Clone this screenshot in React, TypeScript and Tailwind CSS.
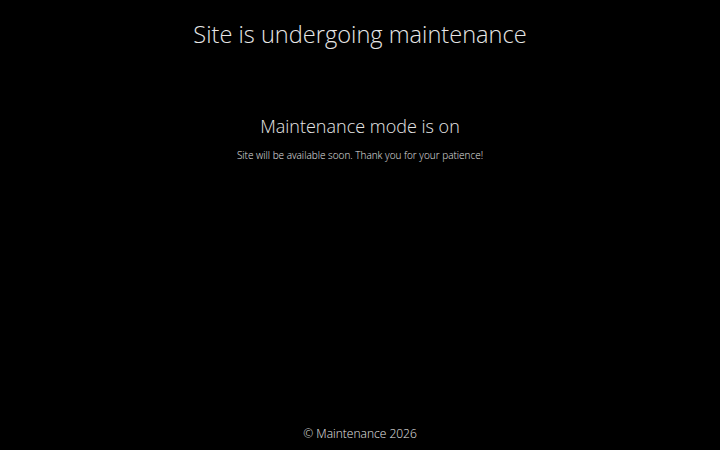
export default function App() {
  return (
    <div
      className="flex h-[450px] w-full flex-col items-center bg-black text-[#e6e6e6]"
      style={{ fontFamily: '"Open Sans", sans-serif' }}
    >
      <header className="pt-[16px]">
        <h1 className="text-[23.6px] font-light leading-[36px]">Site is undergoing maintenance</h1>
      </header>
      <main className="mt-[60px] flex flex-col items-center">
        <h2 className="text-[18px] font-light leading-[28px]">Maintenance mode is on</h2>
        <p className="mt-[8px] text-[10px] font-light leading-[14px]">
          Site will be available soon. Thank you for your patience!
        </p>
      </main>
      <footer className="mt-auto pb-[7px]">
        <p className="text-[12px] font-light leading-[18px]">© Maintenance 2026</p>
      </footer>
    </div>
  );
}
